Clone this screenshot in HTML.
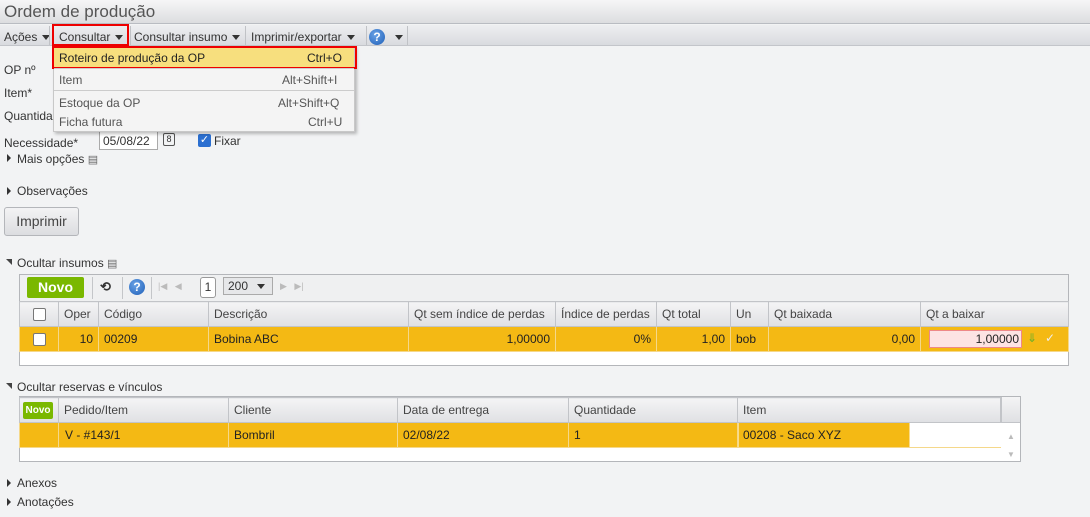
<!DOCTYPE html><html><head><meta charset="utf-8"><style>
*{box-sizing:border-box;margin:0;padding:0}
body{width:1090px;height:517px;overflow:hidden;background:#f2f3f4;font-family:"Liberation Sans",sans-serif;font-size:12px;color:#333;position:relative}
.a{position:absolute;white-space:nowrap}
.title{left:0;top:0;width:1090px;height:24px;background:linear-gradient(#f6f6f7,#dcdde0);border-bottom:1px solid #b9bcc2}
.tb{left:0;top:25px;width:1090px;height:21px;background:linear-gradient(#eeeff1,#d9dbdf);border-bottom:1px solid #c3c5ca}
.tri{display:inline-block;width:0;height:0;border-left:4px solid transparent;border-right:4px solid transparent;border-top:5px solid #333;vertical-align:middle;margin-left:5px}
.sep{position:absolute;top:26px;width:1px;height:19px;background:#c0c2c6}
.rt{width:0;height:0;border-top:4px solid transparent;border-bottom:4px solid transparent;border-left:4px solid #333}
.dt{width:0;height:0;border-left:6px solid transparent;border-top:6px solid #444}
.help{border-radius:50%;background:radial-gradient(circle at 40% 35%,#6aa3e6,#1f5fb8);color:#fff;font-weight:bold;text-align:center}
table{border-collapse:collapse;position:absolute}
td{border:1px solid #cfd1d5;padding:0 5px;height:25px;white-space:nowrap}
tr.h td{background:linear-gradient(#f4f4f5,#dfe0e3);border-color:#c2c4c8;color:#444}
tr.y td{background:#f4b914;border-color:#f5d88a;color:#222}
.r{text-align:right}
.cb{display:inline-block;width:13px;height:13px;border:1px solid #777;border-radius:2px;background:#fff;vertical-align:middle}
</style></head><body>
<div class="a title"></div>
<div class="a" style="left:4px;top:2px;font-size:17px;color:#555">Ordem de produção</div>
<div class="a tb"></div>
<div class="a" style="left:4px;top:30px">Ações<span class="tri"></span></div>
<div class="sep" style="left:49px"></div>
<div class="a" style="left:59px;top:30px">Consultar<span class="tri"></span></div>
<div class="sep" style="left:130px"></div>
<div class="a" style="left:134px;top:30px">Consultar insumo<span class="tri"></span></div>
<div class="sep" style="left:245px"></div>
<div class="a" style="left:251px;top:30px">Imprimir/exportar<span class="tri"></span></div>
<div class="sep" style="left:366px"></div>
<div class="a help" style="left:369px;top:29px;width:16px;height:16px;font-size:12px;line-height:16px">?</div>
<div class="a" style="left:390px;top:30px"><span class="tri"></span></div>
<div class="sep" style="left:407px"></div>
<div class="a" style="left:52px;top:24px;width:77px;height:22px;border:2px solid #e00"></div>

<div class="a" style="left:4px;top:63px">OP nº</div>
<div class="a" style="left:4px;top:86px">Item*</div>
<div class="a" style="left:4px;top:109px">Quantidade</div>
<div class="a" style="left:4px;top:136px">Necessidade*</div>
<div class="a" style="left:99px;top:131px;width:59px;height:19px;border:1px solid #aaa;background:#fff;padding:2px 3px">05/08/22</div>
<div class="a" style="left:163px;top:133px;width:12px;height:13px;border:1px solid #555;border-radius:2px;font-size:9px;text-align:center;line-height:11px">8</div>
<div class="a" style="left:198px;top:134px;width:13px;height:13px;background:#2b6fd0;border-radius:2px;color:#fff;font-size:11px;line-height:13px;text-align:center">✓</div>
<div class="a" style="left:214px;top:134px">Fixar</div>
<div class="a rt" style="left:7px;top:154px"></div>
<div class="a" style="left:17px;top:152px">Mais opções <span style="font-size:11px;color:#666">▤</span></div>
<div class="a rt" style="left:7px;top:187px"></div>
<div class="a" style="left:17px;top:184px">Observações</div>
<div class="a" style="left:4px;top:207px;width:75px;height:29px;border:1px solid #b4b6ba;border-radius:3px;background:linear-gradient(#f3f3f4,#dcdde0);font-size:14px;color:#444;text-align:center;line-height:27px">Imprimir</div>

<!-- menu -->
<div class="a" style="left:53px;top:46px;width:302px;height:86px;background:#f4f4f4;border:1px solid #c8c8c8;box-shadow:2px 2px 3px rgba(0,0,0,.25)"></div>
<div class="a" style="left:54px;top:48px;width:300px;height:19px;background:#f7df7e"></div>
<div class="a" style="left:52px;top:46px;width:305px;height:23px;border:2px solid #e00"></div>
<div class="a" style="left:59px;top:51px;color:#222">Roteiro de produção da OP</div>
<div class="a" style="left:307px;top:51px;color:#222">Ctrl+O</div>
<div class="a" style="left:54px;top:68px;width:300px;height:1px;background:#ccc"></div>
<div class="a" style="left:59px;top:73px;color:#555">Item</div>
<div class="a" style="left:282px;top:73px;color:#555">Alt+Shift+I</div>
<div class="a" style="left:54px;top:90px;width:300px;height:1px;background:#ccc"></div>
<div class="a" style="left:59px;top:96px;color:#555">Estoque da OP</div>
<div class="a" style="left:278px;top:96px;color:#555">Alt+Shift+Q</div>
<div class="a" style="left:59px;top:115px;color:#555">Ficha futura</div>
<div class="a" style="left:308px;top:115px;color:#555">Ctrl+U</div>

<!-- insumos -->
<div class="a dt" style="left:6px;top:259px"></div>
<div class="a" style="left:17px;top:256px">Ocultar insumos <span style="font-size:11px;color:#666">▤</span></div>
<div class="a" style="left:19px;top:274px;width:1050px;height:92px;background:#fff;border:1px solid #b4b6ba"></div>
<div class="a" style="left:20px;top:275px;width:1048px;height:26px;background:#eff0f1"></div>
<div class="a" style="left:27px;top:277px;width:57px;height:21px;background:#7ab800;border-radius:2px;color:#fff;font-weight:bold;font-size:14px;text-align:center;line-height:21px">Novo</div>
<div class="a" style="left:92px;top:277px;width:1px;height:22px;background:#c4c6c9"></div>
<div class="a" style="left:100px;top:279px;font-size:13px;font-weight:bold">⟲</div>
<div class="a" style="left:122px;top:277px;width:1px;height:22px;background:#c4c6c9"></div>
<div class="a help" style="left:129px;top:279px;width:16px;height:16px;font-size:12px;line-height:16px">?</div>
<div class="a" style="left:151px;top:277px;width:1px;height:22px;background:#c4c6c9"></div>
<div class="a" style="left:158px;top:281px;color:#bbb;font-size:9px">|◀&nbsp;&nbsp;&nbsp;◀</div>
<div class="a" style="left:200px;top:277px;width:16px;height:21px;border:1px solid #999;border-radius:3px;background:#fff;text-align:center;line-height:19px">1</div>
<div class="a" style="left:223px;top:277px;width:50px;height:18px;border:1px solid #aaa;background:#e6e7e9;padding-left:4px;line-height:16px">200<span class="tri" style="margin-left:9px"></span></div>
<div class="a" style="left:280px;top:281px;color:#bbb;font-size:9px">▶&nbsp;&nbsp;&nbsp;▶|</div>
<table style="left:19px;top:301px;width:1050px">
<tr class="h"><td style="width:39px;text-align:center"><span class="cb"></span></td><td style="width:40px">Oper</td><td style="width:110px">Código</td><td style="width:200px">Descrição</td><td style="width:147px">Qt sem índice de perdas</td><td style="width:101px">Índice de perdas</td><td style="width:74px">Qt total</td><td style="width:38px">Un</td><td style="width:152px">Qt baixada</td><td>Qt a baixar</td></tr>
<tr class="y"><td style="text-align:center"><span class="cb"></span></td><td class="r">10</td><td>00209</td><td>Bobina ABC</td><td class="r">1,00000</td><td class="r">0%</td><td class="r">1,00</td><td>bob</td><td class="r">0,00</td><td style="position:relative"><div style="position:absolute;left:8px;top:3px;width:93px;height:18px;background:#fde3e3;border:1px solid #e88;text-align:right;padding-right:2px;line-height:16px">1,00000</div><span style="position:absolute;left:106px;top:4px;color:#6bb02a">⇓</span><span style="position:absolute;left:124px;top:4px;color:#eee">✓</span></td></tr>
</table>

<!-- reservas -->
<div class="a dt" style="left:6px;top:383px"></div>
<div class="a" style="left:17px;top:380px">Ocultar reservas e vínculos</div>
<div class="a" style="left:19px;top:396px;width:1002px;height:66px;background:#fff;border:1px solid #b4b6ba"></div>
<table style="left:19px;top:397px;width:982px">
<tr class="h"><td style="width:39px;padding:0 3px"><div style="width:30px;height:17px;background:#7ab800;border-radius:2px;color:#fff;font-weight:bold;font-size:10px;text-align:center;line-height:17px">Novo</div></td><td style="width:170px">Pedido/Item</td><td style="width:169px">Cliente</td><td style="width:171px">Data de entrega</td><td style="width:169px">Quantidade</td><td>Item</td></tr>
<tr class="y" style="height:22px"><td style="height:22px"></td><td style="padding-left:6px">V - #143/1</td><td>Bombril</td><td>02/08/22</td><td>1</td><td style="background:linear-gradient(90deg,#f4b914 171px,#fff 171px);border-right-color:#fff">00208 - Saco XYZ</td></tr>
</table>
<div class="a" style="left:1001px;top:397px;width:19px;height:26px;background:linear-gradient(#f4f4f5,#dfe0e3);border-left:1px solid #c2c4c8;border-bottom:1px solid #c2c4c8"></div>
<div class="a" style="left:1007px;top:428px;color:#bbb;font-size:8px;line-height:18px">▲<br>▼</div>

<div class="a rt" style="left:7px;top:479px"></div>
<div class="a" style="left:17px;top:476px">Anexos</div>
<div class="a rt" style="left:7px;top:498px"></div>
<div class="a" style="left:17px;top:495px">Anotações</div>
</body></html>
